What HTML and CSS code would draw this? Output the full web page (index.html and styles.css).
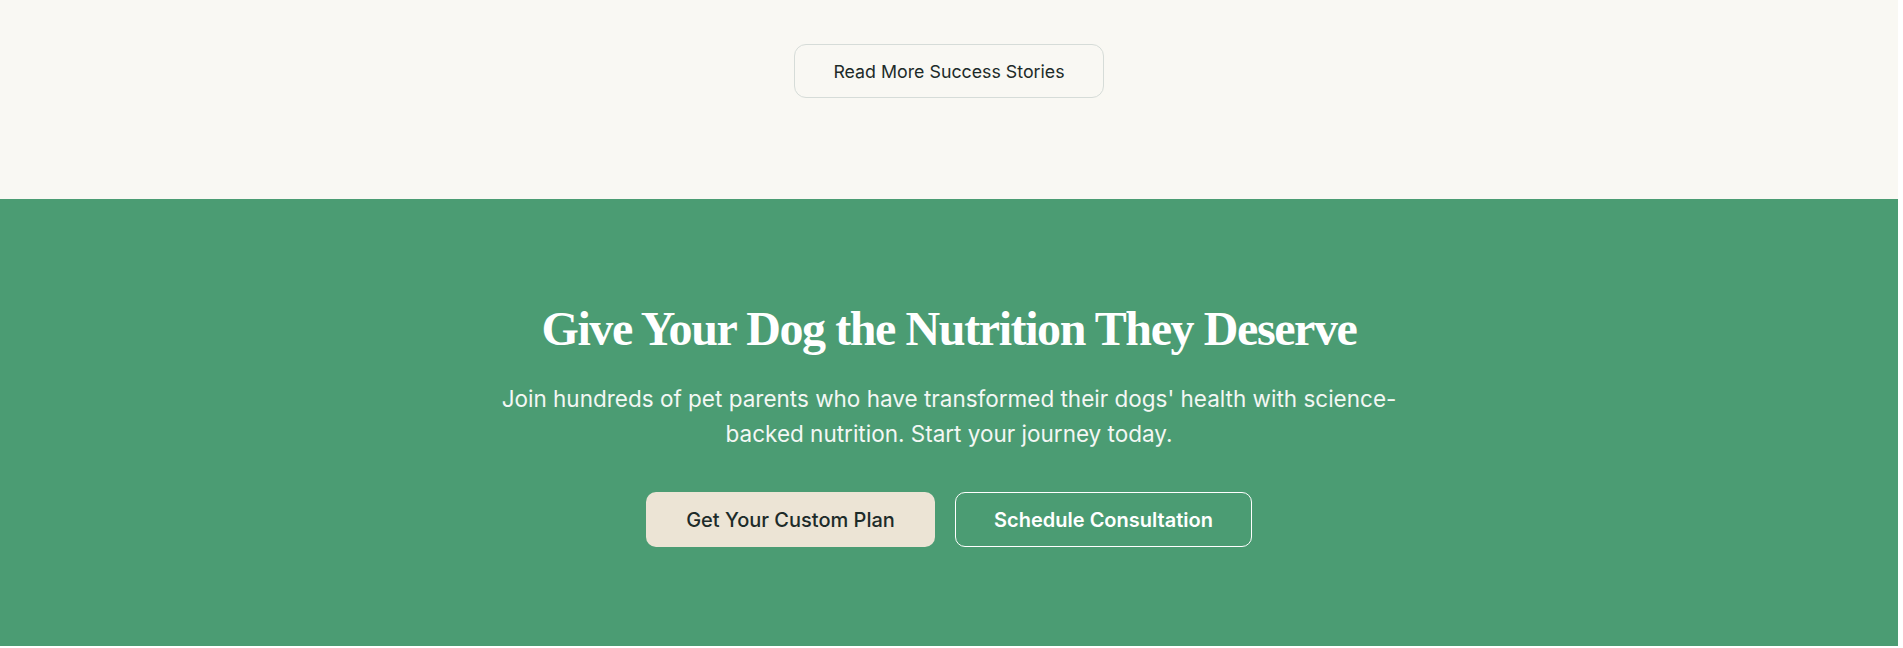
FILE: index.html
```html
<!DOCTYPE html>
<html lang="en">
<head>
<meta charset="utf-8">
<title>Success Stories CTA</title>
<link rel="stylesheet" href="styles.css">
</head>
<body>
<main class="page">
  <section class="stories">
    <a class="btn-outline-dark" href="#">Read More Success Stories</a>
  </section>
  <section class="cta">
    <div class="cta-inner">
      <h2 class="cta-title">Give Your Dog the Nutrition They Deserve</h2>
      <p class="cta-text">Join hundreds of pet parents who have transformed their dogs' health with science-backed nutrition. Start your journey today.</p>
      <div class="cta-actions">
        <a class="btn-cream" href="#">Get Your Custom Plan</a>
        <a class="btn-ghost" href="#">Schedule Consultation</a>
      </div>
    </div>
  </section>
</main>
</body>
</html>
```
FILE: styles.css
```css
* { box-sizing: border-box; }
html, body { margin: 0; padding: 0; }
body {
  background: #ffffff;
  font-family: "Inter", "Noto Sans", sans-serif;
  height: 648px;
  overflow: hidden;
}
.page {
  width: 1898px;
}
.stories {
  background: #f9f8f3;
  padding: 44px 0 101px;
  display: flex;
  justify-content: center;
}
.btn-outline-dark {
  display: inline-block;
  width: 310px;
  height: 54px;
  padding-top: 1px;
  line-height: 52px;
  text-align: center;
  border: 1px solid #d6dcd8;
  border-radius: 12px;
  color: #1d2b29;
  font-size: 17.8px;
  font-weight: 400;
  text-decoration: none;
}
.cta {
  background: #4b9c73;
  height: 447px;
  padding-top: 100px;
}
.cta-inner {
  max-width: 900px;
  margin: 0 auto;
  display: flex;
  flex-direction: column;
  align-items: center;
  text-align: center;
}
.cta-title {
  margin: 0;
  font-family: "Liberation Serif", "Times New Roman", serif;
  font-weight: 700;
  font-size: 48px;
  line-height: 60px;
  color: #ffffff;
  letter-spacing: -1.4px;
}
.cta-text {
  margin: 22px 0 0;
  font-size: 22.5px;
  line-height: 35px;
  color: #f3f7f4;
}
.cta-actions {
  margin-top: 41px;
  display: flex;
  gap: 20px;
}
.btn-cream, .btn-ghost {
  display: inline-flex;
  align-items: center;
  justify-content: center;
  height: 55px;
  border-radius: 10px;
  font-size: 20px;
  font-weight: 500;
  text-decoration: none;
}
.btn-cream {
  width: 289px;
  background: #ece4d5;
  color: #1d2b29;
}
.btn-ghost {
  width: 297px;
  border: 1px solid #ffffff;
  color: #ffffff;
  font-weight: 600;
}
```
